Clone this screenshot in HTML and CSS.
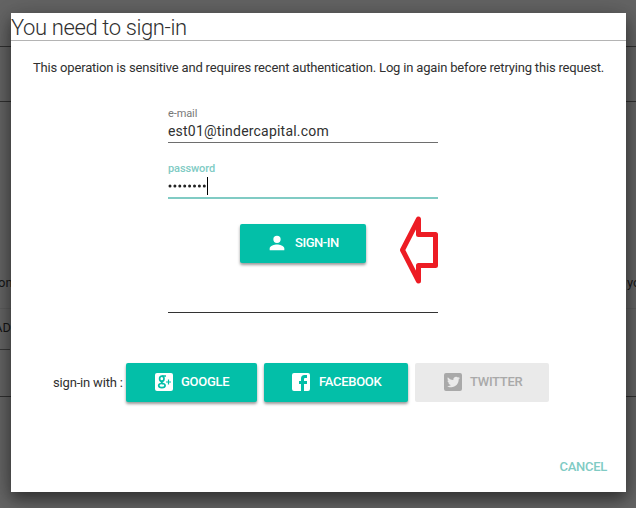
FILE: index.html
```html
<!DOCTYPE html>
<html lang="en">
<head>
<meta charset="utf-8">
<title>Sign in</title>
<link rel="stylesheet" href="styles.css">
</head>
<body>
<div class="backdrop">
  <div class="row r1"></div>
  <div class="row r2"></div>
  <div class="row r3"><span>on</span><span>yo</span></div>
  <div class="row r4"><span>AD</span></div>
  <div class="row r5"></div>
</div>
<main class="dialog">
  <h1>You need to sign-in</h1>
  <p class="message">This operation is sensitive and requires recent authentication. Log in again before retrying this request.</p>
  <form class="form">
    <div class="field">
      <label>e-mail</label>
      <div class="value">est01@tindercapital.com</div>
    </div>
    <div class="field active">
      <label>password</label>
      <div class="value dots"><svg width="38" height="6" viewBox="0 0 38 6"><path d="M2 3h.01M6.9 3h.01M11.8 3h.01M16.7 3h.01M21.6 3h.01M26.5 3h.01M31.4 3h.01M36.3 3h.01"/></svg><i class="caret"></i></div>
    </div>
    <div class="button submit">
      <svg class="icon" viewBox="0 0 24 24"><path d="M12 12a4 4 0 1 0 0-8 4 4 0 0 0 0 8zm0 1.700c-2.700 0-8 1.400-8 4.100V20h16v-2.200c0-2.700-5.300-4.100-8-4.100z"/></svg>
      <span>SIGN-IN</span>
    </div>
    <div class="separator"></div>
  </form>
  <div class="providers">
    <span class="with">sign-in with :</span>
    <div class="button google">
      <svg class="icon" viewBox="0 0 24 24"><rect x="3" y="3" width="18" height="18" rx="2"/><g class="cut"><ellipse cx="9.800" cy="8.700" rx="2.200" ry="2.500"/><path d="M10 6h4M10.500 11.300c-1.800 1-1 1.700.8 2.400"/><ellipse cx="9.900" cy="15.600" rx="3.200" ry="2.100"/></g><path class="cut plus" d="M16.500 9.500v5M14 12h5"/></svg>
      <span>GOOGLE</span>
    </div>
    <div class="button facebook">
      <svg class="icon" viewBox="0 0 24 24"><path d="M5,3H19A2,2 0 0,1 21,5V19A2,2 0 0,1 19,21H5A2,2 0 0,1 3,19V5A2,2 0 0,1 5,3M18,5H15.5A3.5,3.5 0 0,0 12,8.5V11H10V14H12V21H15V14H18V11H15V9A1,1 0 0,1 16,8H18V5Z"/></svg>
      <span>FACEBOOK</span>
    </div>
    <div class="button twitter disabled">
      <svg class="icon" viewBox="0 0 24 24"><path d="M5,3H19A2,2 0 0,1 21,5V19A2,2 0 0,1 19,21H5A2,2 0 0,1 3,19V5A2,2 0 0,1 5,3M17.71,9.33C18.19,8.93 18.75,8.45 19,7.92C18.59,8.13 18.1,8.26 17.56,8.33C18.06,7.97 18.47,7.5 18.68,6.86C18.16,7.14 17.63,7.38 16.97,7.5C15.42,5.63 11.71,7.15 12.37,9.95C9.76,9.79 8.17,8.61 6.85,7.16C6.1,8.38 6.75,10.23 7.64,10.74C7.18,10.71 6.83,10.57 6.5,10.41C6.54,11.95 7.39,12.69 8.58,13.09C8.22,13.16 7.82,13.18 7.44,13.12C7.81,14.19 8.58,14.86 9.9,15C9,15.76 7.34,16.29 6,16.08C7.15,16.81 8.46,17.39 10.28,17.31C14.69,17.11 17.64,13.95 17.71,9.33Z"/></svg>
      <span>TWITTER</span>
    </div>
  </div>
  <div class="actions"><span>CANCEL</span></div>
  <svg class="arrow" width="38" height="68" viewBox="0 0 38 68"><path d="M2.500 34 18.500 3v15.500h17v31h-17V65z"/></svg>
</main>
</body>
</html>
```
FILE: styles.css
```css
* { box-sizing: border-box; }
body {
  margin: 0;
  width: 636px;
  height: 508px;
  overflow: hidden;
  position: relative;
  background: #646464;
  color: #303030;
  font: 13px/20px Roboto, sans-serif;
}
.backdrop { height: 508px; }
.row {
  display: flex;
  justify-content: space-between;
  border-bottom: 1px solid #303030;
  color: #161616;
  font-size: 13px;
}
.r1 { height: 47px; }
.r2 { height: 55px; }
.r3 { height: 207px; padding-top: 171px; border-color: #5c5c5c; }
.r3 span:first-child { margin-left: -2px; }
.r3 span:last-child { width: 9px; white-space: nowrap; }
.r4 { height: 41px; padding-top: 9px; border-image: linear-gradient(90deg, #383838 11px, #646464 11px) 1; }
.r4 span { margin-left: -6px; }
.r5 { height: 47px; }
.dialog {
  position: absolute;
  left: 11px;
  top: 13px;
  width: 615px;
  height: 479px;
  background: #fff;
  box-shadow: 0 7px 14px rgba(0, 0, 0, .45), 0 2px 30px rgba(0, 0, 0, .18);
}
h1 {
  margin: 0;
  height: 28px;
  border-bottom: 1px solid #b4b4b4;
  font-size: 22px;
  font-weight: 300;
  line-height: 29px;
  letter-spacing: -.38px;
  white-space: nowrap;
}
.message {
  margin: 17px 0 0 22px;
  height: 20px;
  letter-spacing: -.18px;
  white-space: nowrap;
}
.form {
  width: 270px;
  margin: 27px 0 0 157px;
  display: flex;
  flex-direction: column;
}
.field {
  height: 38px;
  border-bottom: 1px solid #6e6e6e;
}
.field label {
  display: block;
  height: 18px;
  font-size: 11px;
  line-height: 18px;
  letter-spacing: -.1px;
  color: #777;
}
.field .value {
  height: 19px;
  font-size: 14px;
  line-height: 17px;
  letter-spacing: .2px;
}
.active {
  margin-top: 17px;
  height: 39px;
  border-bottom: 2px solid #80cbc4;
}
.active label { color: #80cbc4; font-weight: 500; }
.active .value { height: 15px; }
.dots { display: flex; align-items: center; }
.dots svg { fill: none; stroke: #222; stroke-width: 3; stroke-linecap: round; }
.caret { width: 1px; height: 18px; margin-left: 1px; background: #000; }
.button {
  height: 39px;
  display: flex;
  align-items: center;
  border-radius: 2px;
  background: #03bfa8;
  color: #fff;
  font-weight: 500;
  letter-spacing: -.28px;
  white-space: nowrap;
  padding: 0 0 2px 26px;
  box-shadow: 0 2px 3px rgba(0, 0, 0, .4);
}
.icon { width: 24px; height: 24px; margin-right: 5px; fill: currentColor; flex: none; }
.submit { width: 126px; margin: 25px 0 0 72px; letter-spacing: -.45px; }
.submit .icon { width: 22px; height: 22px; margin-right: 7px; }
.separator { height: 50px; border-bottom: 1px solid #333; }
.providers {
  display: flex;
  align-items: center;
  margin: 50px 0 0 42px;
}
.with { width: 73px; white-space: nowrap; letter-spacing: -.18px; }
.google { width: 131px; }
.facebook { width: 144px; margin-left: 7px; }
.facebook .icon { margin-left: -1px; margin-right: 6px; }
.twitter { width: 134px; margin-left: 7px; }
.disabled { background: #eaeaea; color: #a9a9a9; box-shadow: none; }
.cut { fill: none; stroke: #03bfa8; stroke-width: 1.7; }
.plus { stroke-width: 1.2; }
.actions {
  display: flex;
  justify-content: flex-end;
  margin: 55px 19px 0 0;
  font-weight: 500;
  letter-spacing: -.28px;
  color: #80cbc4;
}
.arrow {
  position: absolute;
  left: 389px;
  top: 203px;
  fill: none;
  stroke: #ed1c24;
  stroke-width: 5;
  stroke-linejoin: round;
}
```
